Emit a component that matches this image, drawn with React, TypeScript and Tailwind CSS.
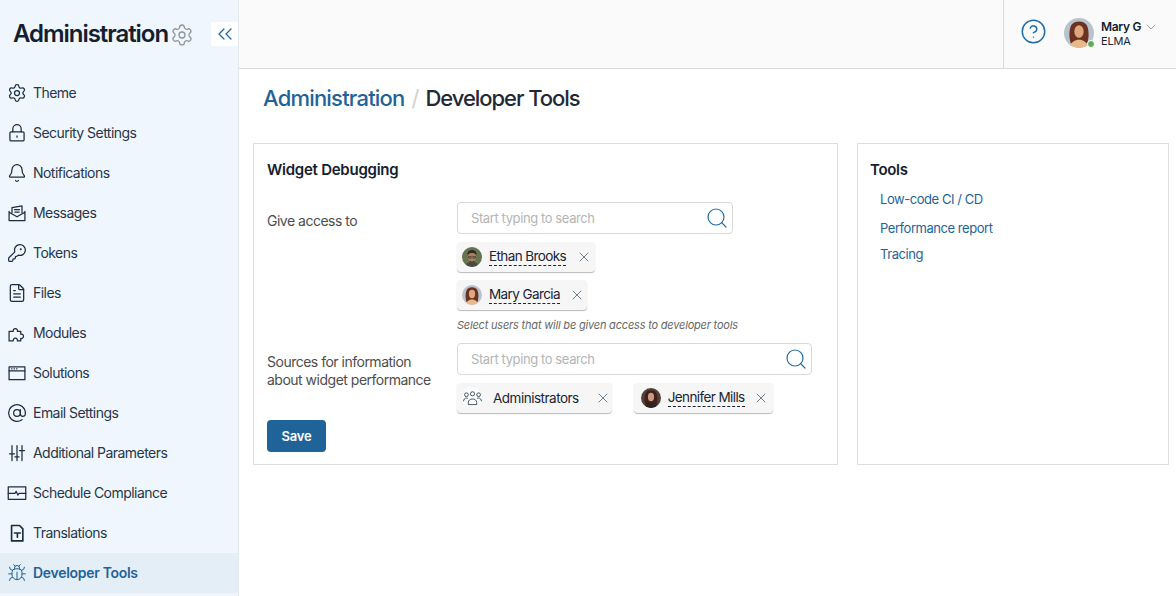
import type { ReactNode } from "react";
import {
  AtSign,
  Bell,
  Bug,
  ChevronDown,
  ChevronsLeft,
  CircleHelp,
  FileText,
  KeyRound,
  Search,
  Settings,
  X,
} from "lucide-react";

type IconProps = { className?: string; strokeWidth?: number };

function Glyph({ className, strokeWidth = 1.5, children }: IconProps & { children: ReactNode }) {
  return (
    <svg
      viewBox="0 0 24 24"
      fill="none"
      stroke="currentColor"
      strokeWidth={strokeWidth}
      strokeLinecap="round"
      strokeLinejoin="round"
      className={className}
    >
      {children}
    </svg>
  );
}

const LockIcon = (p: IconProps) => (
  <Glyph {...p}>
    <rect x="3.5" y="10.5" width="17" height="11" rx="1.5" />
    <path d="M7 10.5V7a5 5 0 0 1 10 0v3.5M12 15.5v1.5" />
  </Glyph>
);
const EnvelopeIcon = (p: IconProps) => (
  <Glyph {...p}>
    <path d="M6 11.5V5.5L18 3.5l0 8M2.5 10v11h19V10M2.5 11l9.5 5.5 9.5-5.5M9 8h6M9.5 11h5" />
  </Glyph>
);
const PuzzleIcon = (p: IconProps) => (
  <Glyph {...p}>
    <path d="M2.5 21.5V10h5a2.6 2.6 0 1 1 5 0h4v3.5a2.6 2.6 0 1 1 0 5v3h-4a2.6 2.6 0 1 0-5 0z" />
  </Glyph>
);
const WindowIcon = (p: IconProps) => (
  <Glyph {...p}>
    <rect x="2.5" y="4.5" width="19" height="15.5" />
    <path d="M2.5 9.5h19M5.5 7h.5M8.5 7h.5M11.5 7h.5" />
  </Glyph>
);
const TunerIcon = (p: IconProps) => (
  <Glyph {...p}>
    <path d="M6 3v18M12 3v18M18 3v18M3 13h6M9.5 16.5h5M15 9h6" />
  </Glyph>
);
const PulseIcon = (p: IconProps) => (
  <Glyph {...p}>
    <rect x="1.5" y="4.5" width="21" height="15" />
    <path d="M1.5 12.5h8l1.5-2.5 2 4.5 1.5-2h8" />
  </Glyph>
);
const TranslationIcon = (p: IconProps) => (
  <Glyph {...p} strokeWidth={2}>
    <path d="M5.5 3h9.5l4 4v14.5h-13.500z" />
    <path d="M9 12h7M12.500 12v5" />
  </Glyph>
);

const NAV = [
  { label: "Theme", Icon: Settings },
  { label: "Security Settings", Icon: LockIcon },
  { label: "Notifications", Icon: Bell },
  { label: "Messages", Icon: EnvelopeIcon },
  { label: "Tokens", Icon: KeyRound },
  { label: "Files", Icon: FileText },
  { label: "Modules", Icon: PuzzleIcon },
  { label: "Solutions", Icon: WindowIcon },
  { label: "Email Settings", Icon: AtSign },
  { label: "Additional Parameters", Icon: TunerIcon },
  { label: "Schedule Compliance", Icon: PulseIcon },
  { label: "Translations", Icon: TranslationIcon },
];

function LongHair({ skin, hair, bg, top, size = 20 }: { skin: string; hair: string; bg: string; top: string; size?: number }) {
  return (
    <svg width={size} height={size} viewBox="0 0 20 20" className="shrink-0 rounded-full">
      <rect width="20" height="20" fill={bg} />
      <path d="M4.500 17c-1.500-5-1-10 .5-12.500 2-3 8-3 10 0 1.500 2.500 2 7.500.5 12.500z" fill={hair} />
      <ellipse cx="10" cy="9" rx="3.100" ry="4.200" fill={skin} />
      <path d="M3 20c1.500-4 4.500-5.500 7-5.500s5.500 1.500 7 5.500z" fill={top} />
    </svg>
  );
}

function EthanFace() {
  return (
    <svg width={20} height={20} viewBox="0 0 20 20" className="shrink-0 rounded-full">
      <rect width="20" height="20" fill="#66744f" />
      <path d="M3 20c1-4 3.500-5 7-5s6 1 7 5z" fill="#4a4a44" />
      <ellipse cx="10" cy="10" rx="4.300" ry="5.200" fill="#a97f5e" />
      <path d="M5.500 8.500C5 4.500 7.500 3 10 3s5 1.500 4.500 5.500c-1-2-2.500-2.500-4.500-2.500S6.500 6.500 5.500 8.500z" fill="#2f2a22" />
      <path d="M6.500 9.500h2.700v1.600H6.500zM10.800 9.500h2.700v1.600h-2.700z" fill="none" stroke="#2b2b2b" strokeWidth="0.6" />
      <path d="M7.500 13.500c1.500 1.500 3.500 1.500 5 0l-.5 1.800H8z" fill="#3a3028" />
    </svg>
  );
}

function GroupIcon() {
  return (
    <svg viewBox="0 0 20 16" width={19} height={15} fill="none" stroke="#3b4a58" strokeWidth="1">
      <circle cx="3.500" cy="4" r="2" />
      <circle cx="10" cy="3" r="2.200" />
      <circle cx="16.500" cy="4" r="2" />
      <path d="M5.500 14.500v-2.500c0-2 2-3.500 4.500-3.500s4.500 1.500 4.500 3.500v2.500zM.5 11c0-2 1.300-3.500 3-3.500.7 0 1.300.2 1.800.6M19.500 11c0-2-1.300-3.500-3-3.500-.7 0-1.300.2-1.800.6" />
    </svg>
  );
}

function Chip({ avatar, name, plain, pad, gap }: { avatar: ReactNode; name: string; plain?: boolean; pad: string; gap: string }) {
  return (
    <div className={`inline-flex h-[30px] items-center rounded-[4px] bg-[#f6f6f6] shadow-[0_1px_1px_rgba(0,0,0,0.28)] ${pad}`}>
      {avatar}
      <span
        className={
          plain
            ? "ml-[11px] text-[13.5px] tracking-[-0.5px] text-[#1b2433]"
            : "ml-[7px] border-b border-dashed border-[#1b2433] pb-[1px] text-[13.5px] leading-[16px] tracking-[-0.6px] text-[#1b2433]"
        }
      >
        {name}
      </span>
      <X className={`h-[16px] w-[16px] text-[#6f7f8c] ${gap}`} strokeWidth={1.5} />
    </div>
  );
}

function SearchBox({ className }: { className: string }) {
  return (
    <div className={`flex h-[32px] items-center justify-between rounded-[4px] border border-[#d9d9d9] bg-white pl-[13px] pr-[3px] ${className}`}>
      <span className="pt-[1px] text-[13px] tracking-[-0.4px] text-[#b4b4b4]">Start typing to search</span>
      <Search className="h-[24px] w-[24px] text-[#1f6ca6]" strokeWidth={1.2} />
    </div>
  );
}

export default function App() {
  return (
    <div
      className="flex h-[596px] w-[1176px] overflow-hidden bg-white text-[#1b2433]"
      style={{ fontFamily: "Inter, 'Liberation Sans', sans-serif" }}
    >
      <aside className="flex w-[239px] shrink-0 flex-col border-r border-[#e3e8ee] bg-[#f0f6fd]">
        <div className="flex h-[73px] shrink-0 items-center pb-[6px] pl-[13px]">
          <h1 className="text-[24px] font-semibold tracking-[-1.05px] text-[#14202e]">Administration</h1>
          <Settings className="ml-[2px] mt-[2px] h-[24px] w-[24px] text-[#8e959c]" strokeWidth={1.3} />
          <div className="ml-[17px] flex h-[24px] w-[27px] items-center justify-center bg-white">
            <ChevronsLeft className="h-[24px] w-[24px] text-[#1f6ca6]" strokeWidth={1.3} />
          </div>
        </div>
        <nav className="flex flex-col">
          {NAV.map(({ label, Icon }) => (
            <div key={label} className="flex h-[40px] items-center pl-[7px]">
              <Icon className="h-[20px] w-[20px] text-[#1b2d42]" strokeWidth={1.5} />
              <span className="ml-[6px] pb-[2px] text-[14px] tracking-[-0.54px] text-[#263648]">{label}</span>
            </div>
          ))}
          <div className="flex h-[40px] items-center bg-[#e4eef7] pl-[7px]">
            <Bug className="h-[20px] w-[20px] text-[#1f6398]" strokeWidth={1.2} />
            <span className="ml-[6px] pb-[2px] text-[14px] font-semibold tracking-[-0.3px] text-[#1f6398]">Developer Tools</span>
          </div>
        </nav>
      </aside>

      <div className="flex min-w-0 flex-1 flex-col">
        <header className="flex h-[69px] shrink-0 justify-end border-b border-[#dcdcdc] bg-[#fafafa]">
          <div className="flex w-[173px] items-center border-l border-[#d9d9d9] pl-[16px]">
            <CircleHelp className="mb-[5px] h-[27px] w-[27px] text-[#1f6ca6]" strokeWidth={1.3} />
            <div className="relative mb-[3px] ml-[17px]">
              <LongHair skin="#dfa77e" hair="#6b3222" bg="#b9c3cd" top="#e8b98d" size={30} />
              <span className="absolute bottom-0 right-[-1px] h-[8px] w-[8px] rounded-full border border-white bg-[#63a85a]" />
            </div>
            <div className="mb-[2px] ml-[7px] leading-none">
              <div className="flex items-center">
                <span className="text-[12px] font-semibold tracking-[-0.3px] text-[#14202e]">Mary G</span>
                <ChevronDown className="ml-[2px] h-[16px] w-[16px] text-[#8f979e]" strokeWidth={1.3} />
              </div>
              <div className="mt-[1px] text-[11px] tracking-[-0.2px] text-[#1b2433]">ELMA</div>
            </div>
          </div>
        </header>

        <div className="flex h-[74px] shrink-0 items-center pb-[16px] pl-[24px]">
          <span className="text-[22px] font-medium tracking-[-0.8px] text-[#1f6398]">Administration</span>
          <span className="ml-[7px] mr-[6px] text-[22px] text-[#d0d0d0]">/</span>
          <span className="text-[22px] font-medium tracking-[-1.05px] text-[#1f2a36]">Developer Tools</span>
        </div>

        <div className="flex items-stretch pl-[14px]">
          <section className="h-[322px] w-[585px] border border-[#dedede] px-[13px] pt-[16px]">
            <h2 className="text-[15px] font-semibold leading-[20px] tracking-[-0.25px] text-[#14202e]">Widget Debugging</h2>
            <div className="mt-[22px] flex">
              <div className="w-[190px] shrink-0 pt-[10px] text-[14px] leading-[18px] tracking-[-0.5px] text-[#4d4d4d]">Give access to</div>
              <div className="flex flex-col items-start">
                <SearchBox className="w-[276px]" />
                <div className="mt-[8px] flex flex-col items-start gap-[8px]">
                  <Chip pad="pl-[5px] pr-[3px]" gap="ml-[10px]" name="Ethan Brooks" avatar={<EthanFace />} />
                  <Chip pad="pl-[5px] pr-[2px]" gap="ml-[9px]" name="Mary Garcia" avatar={<LongHair skin="#dfa77e" hair="#6b3222" bg="#b9c3cd" top="#e8b98d" />} />
                </div>
                <p className="mt-[8px] text-[11px] italic leading-[14px] tracking-[-0.19px] text-[#666]">Select users that will be given access to developer tools</p>
              </div>
            </div>
            <div className="mt-[11px] flex">
              <div className="w-[190px] shrink-0 pt-[10px] text-[14px] leading-[18px] tracking-[-0.5px] text-[#4d4d4d]">
                Sources for information
                <br />
                about widget performance
              </div>
              <div className="flex flex-col items-start">
                <SearchBox className="w-[355px]" />
                <div className="mt-[8px] flex gap-[22px]">
                  <Chip
                    plain
                    pad="pl-[5px] pr-[1px]"
                    gap="ml-[16px]"
                    name="Administrators"
                    avatar={
                      <span className="flex h-[20px] w-[20px] items-center justify-center rounded-full bg-white">
                        <GroupIcon />
                      </span>
                    }
                  />
                  <Chip pad="pl-[7px] pr-[4px]" gap="ml-[8px]" name="Jennifer Mills" avatar={<LongHair skin="#c99a80" hair="#3f2119" bg="#54403a" top="#2d2320" />} />
                </div>
              </div>
            </div>
            <button type="button" className="mt-[7px] h-[32px] w-[59px] rounded-[4px] bg-[#1f6398] pt-[1px] text-[13px] font-semibold tracking-[-0.2px] text-white">
              Save
            </button>
          </section>

          <section className="ml-[19px] h-[322px] w-[312px] border border-[#dedede] pl-[12px] pt-[16px]">
            <h2 className="text-[15px] font-semibold leading-[20px] tracking-[-0.3px] text-[#14202e]">Tools</h2>
            <div className="ml-[10px] mt-[9px] flex flex-col items-start text-[13px] tracking-[-0.45px] text-[#1f6398]">
              <a className="leading-[20px]">Low-code CI / CD</a>
              <a className="mt-[9px] leading-[20px]">Performance report</a>
              <a className="mt-[6px] leading-[20px]">Tracing</a>
            </div>
          </section>
        </div>
      </div>
    </div>
  );
}
